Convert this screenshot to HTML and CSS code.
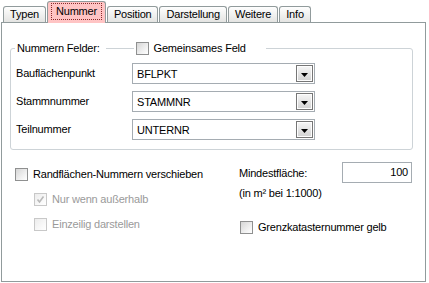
FILE: index.html
```html
<!DOCTYPE html>
<html>
<head>
<meta charset="utf-8">
<link rel="stylesheet" href="styles.css">
</head>
<body>
<div class="window">
  <div class="tabs">
    <div class="tab">Typen</div>
    <div class="tab active"><span class="focus">Nummer</span></div>
    <div class="tab">Position</div>
    <div class="tab">Darstellung</div>
    <div class="tab">Weitere</div>
    <div class="tab">Info</div>
  </div>
  <div class="panel">
    <div class="group">
      <div class="group-head">
        <span class="legend">Nummern Felder:</span>
        <span class="legend-check"><span class="cb"></span><span class="cb-label">Gemeinsames Feld</span></span>
      </div>
      <div class="rows">
        <div class="row">
          <span class="label">Bauflächenpunkt</span>
          <div class="combo"><span class="combo-text">BFLPKT</span><span class="combo-btn"><svg width="7" height="4" viewBox="0 0 7 4"><polygon points="0,0 7,0 3.5,4" fill="#000"/></svg></span></div>
        </div>
        <div class="row">
          <span class="label">Stammnummer</span>
          <div class="combo"><span class="combo-text">STAMMNR</span><span class="combo-btn"><svg width="7" height="4" viewBox="0 0 7 4"><polygon points="0,0 7,0 3.5,4" fill="#000"/></svg></span></div>
        </div>
        <div class="row">
          <span class="label">Teilnummer</span>
          <div class="combo"><span class="combo-text">UNTERNR</span><span class="combo-btn"><svg width="7" height="4" viewBox="0 0 7 4"><polygon points="0,0 7,0 3.5,4" fill="#000"/></svg></span></div>
        </div>
      </div>
    </div>
    <div class="lower">
      <div class="col-left">
        <div class="item"><span class="cb"></span><span>Randflächen-Nummern verschieben</span></div>
        <div class="item indent disabled"><span class="cb dis"><svg width="11" height="11" viewBox="0 0 11 11"><polyline points="2.5,5.5 4.5,8 8.5,2.5" fill="none" stroke="#b9b9b9" stroke-width="1.6"/></svg></span><span>Nur wenn außerhalb</span></div>
        <div class="item indent disabled"><span class="cb dis"></span><span>Einzeilig darstellen</span></div>
      </div>
      <div class="col-right">
        <div class="min-row"><span>Mindestfläche:</span><div class="input">100</div></div>
        <div class="hint">(in m² bei 1:1000)</div>
        <div class="item grenz"><span class="cb"></span><span>Grenzkatasternummer gelb</span></div>
      </div>
    </div>
  </div>
</div>
</body>
</html>
```

FILE: styles.css
```css
html, body {
  margin: 0;
  padding: 0;
  background: #fff;
}
body {
  font-family: "Liberation Sans", Arial, sans-serif;
  font-size: 11px;
  letter-spacing: -0.2px;
  color: #000;
}
.window {
  width: 429px;
  height: 283px;
  overflow: hidden;
}
.tabs {
  display: flex;
  align-items: flex-end;
  height: 22px;
  padding-left: 3px;
}
.tab {
  height: 16px;
  box-sizing: border-box;
  border: 1px solid #919b9c;
  border-bottom: none;
  border-radius: 3px 3px 0 0;
  padding: 0 6px;
  line-height: 15px;
  background: linear-gradient(#fefefe, #e4e4e2);
  white-space: nowrap;
}
.tab + .tab {
  margin-left: 1px;
}
.tab.active {
  position: relative;
  z-index: 1;
  height: 22px;
  margin-bottom: -1px;
  padding: 0 3px 2px;
  background: #ffc4c4;
  display: flex;
  align-items: center;
}
.focus {
  border: 1px dotted #8a2a2a;
  padding: 0 4px;
  line-height: 15px;
}
.panel {
  box-sizing: border-box;
  width: 425px;
  height: 260px;
  margin-left: 1px;
  border: 1px solid #919b9c;
  background: #fff;
  padding-top: 25px;
}
.group {
  box-sizing: border-box;
  width: 403px;
  margin-left: 8px;
  border: 1px solid #cdd3d7;
  border-radius: 3px;
}
.group-head {
  display: flex;
  align-items: center;
  height: 13px;
  margin-top: -7px;
  padding-left: 4px;
}
.legend {
  background: #fff;
  padding: 0 6px 0 2px;
  line-height: 13px;
}
.legend-check {
  display: flex;
  align-items: center;
  gap: 5px;
  margin-left: 28px;
  padding: 0 20px 0 2px;
  background: #fff;
  line-height: 13px;
}
.rows {
  display: flex;
  flex-direction: column;
  gap: 7px;
  margin-top: 8px;
  padding: 0 0 9px 5px;
}
.row {
  display: flex;
  align-items: center;
  height: 21px;
}
.label {
  width: 116px;
  padding-bottom: 2px;
}
.combo {
  box-sizing: border-box;
  width: 183px;
  height: 21px;
  border: 1px solid #a5acb2;
  display: flex;
  align-items: center;
  justify-content: space-between;
}
.combo-text {
  padding-left: 4px;
}
.combo-btn {
  box-sizing: border-box;
  width: 17px;
  height: 17px;
  margin-right: 1px;
  border: 1px solid #767676;
  background: linear-gradient(#f6f6f6, #d2d2d2);
  box-shadow: inset 0 0 0 1px #fdfdfd;
  display: flex;
  align-items: center;
  justify-content: center;
  padding-top: 2px;
}
.combo-btn svg {
  display: block;
}
.cb {
  flex: none;
  box-sizing: border-box;
  width: 13px;
  height: 13px;
  border: 1px solid #8f9090;
  background: linear-gradient(135deg, #d6d6d6 0%, #f2f2f2 65%, #ffffff 100%);
  display: flex;
  align-items: center;
  justify-content: center;
}
.cb.dis {
  border-color: #c8c8c8;
  background: linear-gradient(135deg, #ececec 0%, #fafafa 70%, #ffffff 100%);
}
.cb svg {
  display: block;
}
.lower {
  display: flex;
  margin-left: 13px;
}
.col-left {
  width: 224px;
  padding-top: 18px;
  display: flex;
  flex-direction: column;
  gap: 12px;
}
.item {
  display: flex;
  align-items: center;
  gap: 5px;
  height: 13px;
  line-height: 13px;
  white-space: nowrap;
}
.indent {
  margin-left: 19px;
}
.disabled {
  color: #9a9a9a;
}
.col-right {
  padding-top: 12px;
  display: flex;
  flex-direction: column;
}
.min-row {
  display: flex;
  align-items: center;
  justify-content: space-between;
  width: 173px;
  height: 21px;
}
.input {
  box-sizing: border-box;
  width: 70px;
  height: 21px;
  border: 1px solid #a5acb2;
  text-align: right;
  padding-right: 3px;
  line-height: 19px;
}
.hint {
  margin-top: 4px;
  line-height: 13px;
}
.grenz {
  margin-top: 21px;
  margin-left: 1px;
}
```
